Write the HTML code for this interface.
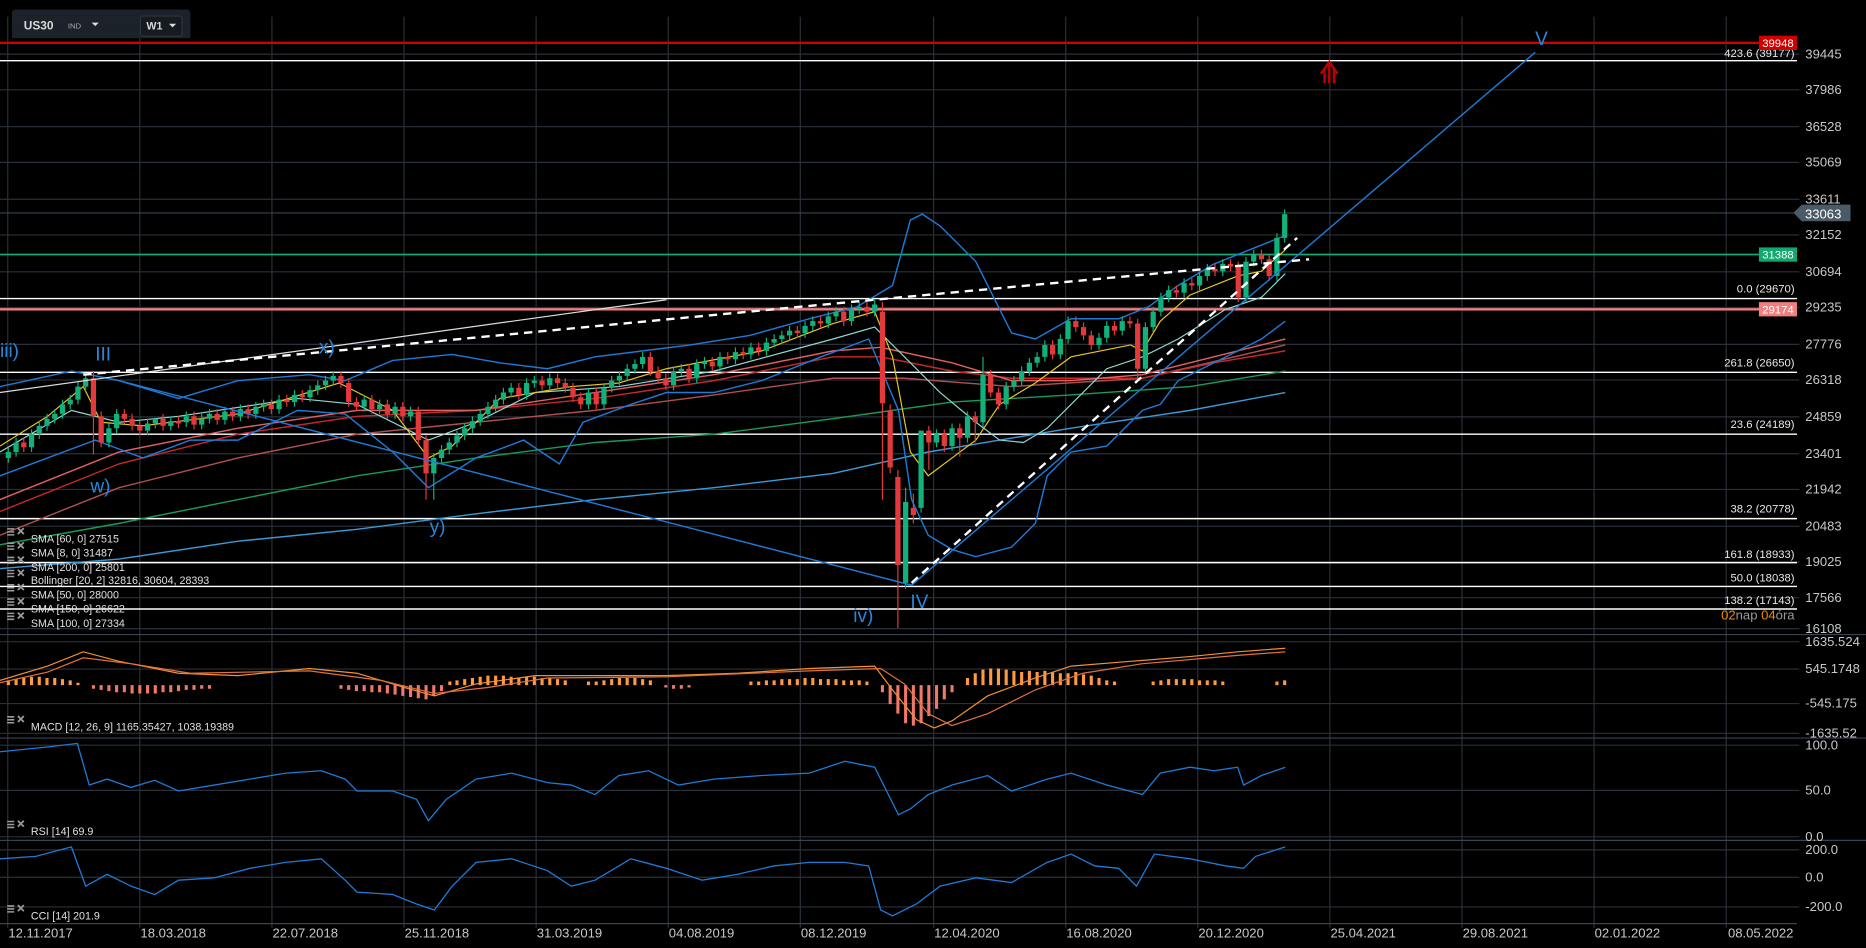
<!DOCTYPE html>
<html><head><meta charset="utf-8">
<style>
html,body{margin:0;padding:0;background:#000;overflow:hidden}
svg{display:block}
text{font-family:"Liberation Sans",sans-serif}
</style></head>
<body>
<svg width="1866" height="948" viewBox="0 0 1568 797" preserveAspectRatio="none" xmlns="http://www.w3.org/2000/svg">
<rect width="1568" height="797" fill="#000"/>
<g stroke="#2a3038" stroke-width="1">
<path d="M0 45.5H1512M0 75.5H1512M0 106.5H1512M0 136.5H1512M0 167.5H1512M0 197.5H1512M0 228.5H1512M0 258.5H1512M0 289.5H1512M0 319.5H1512M0 350.5H1512M0 381.5H1512M0 411.5H1512M0 442.5H1512M0 472.5H1512M0 502.5H1512M0 528.5H1512M0 539.5H1512M0 562.5H1512M0 591.5H1512M0 616.5H1512M0 626.5H1512M0 664.5H1512M0 703.5H1512M0 714.5H1512M0 737.5H1512M0 762.5H1512"/>
<path d="M6.5 14V780M117.5 14V780M228.5 14V780M339.5 14V780M450.5 14V780M561.5 14V780M672.5 14V780M784.5 14V780M895.5 14V780M1006.5 14V780M1117.5 14V780M1228.5 14V780M1339.5 14V780M1450.5 14V780"/>
</g>
<g stroke="#3a4450" stroke-width="1">
<line x1="0" y1="533.5" x2="1568" y2="533.5"/>
<line x1="0" y1="620.5" x2="1568" y2="620.5"/>
<line x1="0" y1="706.5" x2="1568" y2="706.5"/>
<line x1="0" y1="776.5" x2="1510" y2="776.5"/>
</g>
<g stroke="#fff" stroke-width="1.2">
<line x1="0" y1="51" x2="1510" y2="51"/>
<line x1="0" y1="251" x2="1510" y2="251"/>
<line x1="0" y1="313" x2="1510" y2="313"/>
<line x1="0" y1="365" x2="1510" y2="365"/>
<line x1="0" y1="436" x2="1510" y2="436"/>
<line x1="0" y1="473" x2="1510" y2="473"/>
<line x1="0" y1="493" x2="1510" y2="493"/>
<line x1="0" y1="512" x2="1510" y2="512"/>
</g>
<line x1="0" y1="36" x2="1480" y2="36" stroke="#d00000" stroke-width="2"/>
<line x1="0" y1="214" x2="1480" y2="214" stroke="#12a870" stroke-width="1.5"/>
<line x1="0" y1="260" x2="1480" y2="260" stroke="#f08080" stroke-width="2"/>
<line x1="0" y1="179" x2="1510" y2="179" stroke="#3a4450" stroke-width="1"/>
<!-- moving averages -->
<g fill="none" stroke-width="1.2">
<polyline stroke="#3a9ad8" points="0,478 100,470 200,455 300,445 400,432 500,420 600,410 700,398 780,380 900,360 1000,345 1080,330"/>
<polyline stroke="#1a9a5a" points="0,458 100,440 200,420 300,400 400,385 500,372 600,365 700,352 800,338 900,332 1000,325 1080,312"/>
<polyline stroke="#b05050" points="0,450 100,410 200,385 300,365 400,355 500,345 600,332 700,318 760,318 850,325 960,318 1080,290"/>
<polyline stroke="#c82828" points="0,430 100,390 200,365 300,350 400,345 500,335 600,320 700,300 740,300 800,312 850,318 900,318 960,318 1020,305 1080,295"/>
<polyline stroke="#e06060" points="0,420 100,380 200,360 300,345 400,345 500,330 600,315 700,295 740,292 800,305 850,320 900,320 960,315 1020,300 1080,285"/>
<polyline stroke="#8fd8d0" stroke-width="1" points="0,380 60,345 100,355 150,350 250,335 300,340 360,370 400,355 450,330 520,325 600,312 700,285 735,275 760,300 790,330 820,355 840,370 860,372 880,360 900,340 930,310 960,300 990,285 1030,260 1060,250 1080,230"/>
<polyline stroke="#e8c820" stroke-width="1" points="0,375 40,350 70,325 85,355 120,358 200,348 285,322 330,345 360,385 380,375 420,335 480,325 520,322 560,310 640,295 700,272 735,262 750,300 765,380 780,400 800,385 820,370 840,340 870,322 900,300 950,290 960,295 975,270 1000,248 1040,232 1060,228 1080,210"/>
<polyline stroke="#1e7ad6" points="0,325 60,312 100,320 150,335 200,320 260,315 290,320 330,303 380,298 420,305 460,310 500,300 540,295 580,290 630,282 680,268 720,258 750,240 765,185 775,180 790,190 820,220 850,280 870,285 900,268 940,268 965,258 990,240 1020,222 1050,210 1080,198"/>
<polyline stroke="#1e7ad6" points="0,400 40,385 80,370 120,385 160,370 200,370 250,345 290,348 330,380 360,410 400,385 440,370 470,390 490,355 530,340 560,330 600,330 640,320 690,300 730,285 755,345 766,420 780,450 800,462 820,468 850,460 870,440 880,400 900,380 930,375 960,345 975,340 990,320 1030,300 1060,285 1080,270"/>
</g>
<!-- candle wicks -->
<path fill="none" stroke="#12b07a" stroke-width="1" d="M7 376V389M13.5 368V384M26.5 361V380M33 354V369M39.5 348V362M46 344V356M52.5 336V352M59 332V344M65.5 321V340M72 314V329M91.5 356V376M98 344V364M124 352V366M130.5 352V360M143.5 350V362M156.5 346V359M169.5 348V361M176 344V356M189 342V357M202 340V354M215 338V352M221.5 336V346M234.5 332V348M247.5 328V342M260.5 324V338M267 320V332M273.5 316V328M280 312V324M306 332V346M319 336V348M332 338V352M345 342V354M364.5 381V420M371 374V389M377.5 368V382M384 362V376M390.5 356V370M397 350V364M403.5 344V358M410 338V352M416.5 332V346M423 326V340M429.5 322V334M442.5 318V336M449 316V326M462 314V328M494.5 326V344M507.5 322V344M514 316V330M520.5 312V324M527 306V320M533.5 302V314M540 296V310M566 308V328M572.5 306V316M585.5 302V322M592 300V310M605 296V312M618 292V306M631 288V302M644 284V299M650.5 281V292M657 278V289M663.5 274V286M676.5 270V284M683 266V278M696 262V276M702.5 258V270M715.5 256V274M722 254V264M735 252V266M761 410V495M774 420V431M787 361V376M800 356V379M813 346V372M826 300V359M845.5 321V344M852 316V329M858.5 308V324M865 301V316M871.5 296V309M878 286V304M891 281V302M897.5 266V289M923.5 280V294M930 270V288M943 266V282M962.5 271V314M969 258V279M975.5 246V266M982 240V254M995 234V250M1008 228V244M1014.5 222V236M1027.5 218V232M1047 216V254M1053.5 210V224M1073 196V236M1079.5 176V204"/>
<path fill="none" stroke="#e23a3a" stroke-width="1" d="M20 368V380M78.5 312V382M85 346V376M104.5 344V356M111 348V362M117.5 354V366M137 348V362M150 350V360M163 346V361M182.5 344V357M195.5 342V354M208.5 340V352M228 336V348M241 332V342M254 328V338M286.5 312V326M293 318V342M299.5 334V346M312.5 332V348M325.5 336V352M338.5 338V354M351.5 342V374M358 366V420M436 322V336M455.5 316V328M468.5 314V326M475 318V330M481.5 322V338M488 330V344M501 326V344M546.5 296V316M553 308V322M559.5 314V328M579 306V322M598.5 300V312M611.5 296V306M624.5 292V302M637.5 288V299M670 274V284M689.5 266V276M709 258V274M728.5 254V266M741.5 254V420M748 340V398M754.5 395V528M767.5 415V440M780.5 358V395M793.5 361V380M806.5 356V384M819.5 346V372M832.5 311V334M839 326V344M884.5 286V302M904 266V279M910.5 271V286M917 278V294M936.5 270V282M949.5 266V276M956 268V320M988.5 240V250M1001.5 234V244M1021 222V232M1034 218V228M1040.5 220V254M1060 210V222M1066.5 214V236"/>
<!-- candle bodies -->
<path fill="none" stroke="#12b07a" stroke-width="4.4" d="M7 385V380M13.5 380V372M26.5 376V365M33 365V358M39.5 358V352M46 352V348M52.5 348V340M59 340V336M65.5 336V325M72 325V318M91.5 372V360M98 360V348M124 362V356M130.5 356V352M143.5 358V354M156.5 355V350M169.5 357V352M176 352V348M189 353V346M202 350V344M215 348V342M221.5 342V340M234.5 344V336M247.5 338V332M260.5 334V328M267 328V324M273.5 324V320M280 320V316M306 342V336M319 344V340M332 348V342M345 350V346M364.5 398V385M371 385V378M377.5 378V372M384 372V366M390.5 366V360M397 360V354M403.5 354V348M410 348V342M416.5 342V336M423 336V330M429.5 330V326M442.5 332V322M449 322V320M462 324V318M494.5 340V330M507.5 340V326M514 326V320M520.5 320V316M527 316V310M533.5 310V306M540 306V300M566 324V312M572.5 312V310M585.5 318V306M592 306V304M605 308V300M618 302V296M631 298V292M644 295V288M650.5 288V285M657 285V282M663.5 282V278M676.5 280V274M683 274V270M696 272V266M702.5 266V262M715.5 270V260M722 260V258M735 262V256M761 490V422M774 427V362M787 372V365M800 375V360M813 368V350M826 355V315M845.5 340V325M852 325V320M858.5 320V312M865 312V305M871.5 305V300M878 300V290M891 298V285M897.5 285V270M923.5 290V284M930 284V274M943 278V270M962.5 310V275M969 275V262M975.5 262V250M982 250V244M995 246V238M1008 240V232M1014.5 232V226M1027.5 228V222M1047 250V220M1053.5 220V214M1073 232V200M1079.5 200V180"/>
<path fill="none" stroke="#e23a3a" stroke-width="4.4" d="M20 372V376M78.5 318V350M85 350V372M104.5 348V352M111 352V358M117.5 358V362M137 352V358M150 354V356M163 350V357M182.5 348V353M195.5 346V350M208.5 344V348M228 340V344M241 336V338M254 332V334M286.5 316V322M293 322V338M299.5 338V342M312.5 336V344M325.5 340V348M338.5 342V350M351.5 346V370M358 370V398M436 326V332M455.5 320V324M468.5 318V322M475 322V326M481.5 326V334M488 334V340M501 330V340M546.5 300V312M553 312V318M559.5 318V324M579 310V318M598.5 304V308M611.5 300V302M624.5 296V298M637.5 292V295M670 278V280M689.5 270V272M709 262V270M728.5 258V262M741.5 262V339M748 345V393M754.5 401V475M767.5 427V433M780.5 362V372M793.5 365V375M806.5 360V368M819.5 350V355M832.5 315V330M839 330V340M884.5 290V298M904 270V275M910.5 275V282M917 282V290M936.5 274V278M949.5 270V272M956 272V310M988.5 244V246M1001.5 238V240M1021 226V228M1034 222V224M1040.5 224V250M1060 214V218M1066.5 218V232"/>
<!-- wave lines -->
<polyline points="100,320 766,492 1290,44" fill="none" stroke="#1e7ad6" stroke-width="1.2"/>
<line x1="0" y1="330" x2="560" y2="252" stroke="#ddd" stroke-width="1"/>
<polyline points="70,315 735,252 1100,218" fill="none" stroke="#fff" stroke-width="2" stroke-dasharray="7,5"/>
<line x1="766" y1="490" x2="1090" y2="200" stroke="#fff" stroke-width="2" stroke-dasharray="7,5"/>
<!-- MACD -->
<path fill="none" stroke="#ff9a40" stroke-width="2.6" d="M7 576V572M13.5 576V571M20 576V570M26.5 576V569M33 576V569M39.5 576V570M46 576V570M52.5 576V571M59 576V572M65.5 576V574M378 576V573M384 576V572M390.5 576V571M397 576V570M403.5 576V569M410 576V568M416.5 576V568M423 576V568M429.5 576V569M436 576V570M442.5 576V569M449 576V569M455.5 576V570M462 576V570M468.5 576V571M475 576V572M494.5 576V573M501 576V573M507.5 576V572M514 576V571M520.5 576V570M527 576V570M533.5 576V570M540 576V571M546.5 576V572M631 576V573M637.5 576V573M644 576V572M650.5 576V572M657 576V571M663.5 576V571M670 576V571M676.5 576V570M683 576V570M689.5 576V571M696 576V571M702.5 576V571M709 576V572M715.5 576V572M722 576V572M728.5 576V573M813 576V570M819.5 576V566M826 576V563M832.5 576V562M839 576V562M845.5 576V563M852 576V564M858.5 576V565M865 576V564M871.5 576V565M878 576V564M884.5 576V565M891 576V566M897.5 576V566M904 576V565M910.5 576V567M917 576V568M923.5 576V570M930 576V572M936.5 576V573M969 576V573M975.5 576V572M982 576V571M988.5 576V571M995 576V571M1001.5 576V571M1008 576V572M1014.5 576V572M1021 576V572M1027.5 576V573M1073 576V573M1079.5 576V572"/>
<path fill="none" stroke="#f07868" stroke-width="2.6" d="M78.5 576V579M85 576V580M91.5 576V581M98 576V582M104.5 576V582M111 576V583M117.5 576V583M124 576V583M130.5 576V583M137 576V582M143.5 576V582M150 576V581M156.5 576V580M163 576V580M169.5 576V579M176 576V579M286.5 576V579M293 576V580M299.5 576V581M306 576V581M312.5 576V582M319 576V582M325.5 576V583M332 576V584M338.5 576V585M345 576V586M351.5 576V587M358 576V588M364.5 576V585M371 576V581M559.5 576V578M566 576V579M572.5 576V579M579 576V578M741.5 576V582M748 576V592M754.5 576V600M761 576V608M767.5 576V610M774 576V608M780.5 576V602M787 576V596M793.5 576V588M800 576V582"/>
<polyline fill="none" stroke="#f09030" stroke-width="1" points="0,572 40,560 70,548 100,556 150,566 200,568 260,562 300,566 340,578 365,585 400,575 450,568 500,568 560,568 620,566 680,562 735,560 750,580 770,605 785,612 800,606 830,585 870,570 900,560 950,556 1000,552 1040,548 1080,545"/>
<polyline fill="none" stroke="#e07040" stroke-width="1" points="0,574 40,565 70,553 110,558 160,566 260,564 320,572 365,583 410,578 460,570 560,569 680,564 740,562 760,575 780,600 800,610 830,600 870,580 910,566 960,558 1040,551 1080,548"/>
<!-- RSI / CCI -->
<polyline fill="none" stroke="#1e7ad6" stroke-width="1.1" points="0,632 20,630 40,628 65,625 75,660 90,655 110,662 130,656 150,665 180,660 210,655 240,650 270,648 290,655 300,665 330,665 350,672 360,690 375,672 400,655 430,650 460,658 480,660 500,668 520,652 545,648 570,660 600,655 640,652 680,650 710,640 735,645 745,665 755,685 765,680 780,668 800,660 830,652 850,665 880,655 900,650 930,660 960,668 975,650 1000,645 1020,648 1040,645 1045,660 1060,652 1080,645"/>
<polyline fill="none" stroke="#1e7ad6" stroke-width="1.1" points="0,722 30,720 60,712 72,745 90,735 110,745 130,752 150,740 180,738 210,730 240,725 270,722 290,740 300,750 330,752 350,760 365,765 380,745 400,725 430,722 460,732 480,745 500,740 530,722 560,730 590,740 620,735 650,728 680,725 710,725 730,728 740,765 750,770 770,760 790,745 820,738 850,742 880,725 900,718 920,728 940,730 955,745 970,718 1000,722 1030,728 1045,730 1055,720 1080,712"/>
<!-- red arrow -->
<path d="M1117 70 L1117 54 M1110 62 L1117 52 L1124 62 M1113 70 L1113 58 M1121 70 L1121 58" stroke="#c00000" stroke-width="2" fill="none"/>
<g fill="#2a86d8" font-size="16">
<text x="0" y="300">iii)</text>
<text x="80" y="303">III</text>
<text x="268" y="297">x)</text>
<text x="76" y="414">w)</text>
<text x="361" y="448">y)</text>
<text x="717" y="523">iv)</text>
<text x="765" y="511">IV</text>
<text x="1290" y="38">V</text>
</g>
<g fill="#e8e8e8" font-size="9.5" text-anchor="end">
<text x="1508" y="48">423.6 (39177)</text>
<text x="1508" y="246">0.0 (29670)</text>
<text x="1508" y="308">261.8 (26650)</text>
<text x="1508" y="360">23.6 (24189)</text>
<text x="1508" y="431">38.2 (20778)</text>
<text x="1508" y="469">161.8 (18933)</text>
<text x="1508" y="489">50.0 (18038)</text>
<text x="1508" y="508">138.2 (17143)</text>
</g>
<text x="1508" y="521" font-size="11" text-anchor="end" fill="#999"><tspan fill="#f08a00">02</tspan>nap <tspan fill="#f08a00">04</tspan>óra</text>
<rect x="1478" y="30" width="32" height="12" fill="#d00000"/>
<text x="1494" y="39.5" font-size="9.5" fill="#fff" text-anchor="middle">39948</text>
<rect x="1478" y="208" width="32" height="12" fill="#12a870"/>
<text x="1494" y="217.5" font-size="9.5" fill="#fff" text-anchor="middle">31388</text>
<rect x="1478" y="254" width="32" height="12" fill="#f08080"/>
<text x="1494" y="263.5" font-size="9.5" fill="#fff" text-anchor="middle">29174</text>
<path d="M1507 179 L1514 172 L1555 172 L1555 186 L1514 186 Z" fill="#4a5a66"/>
<text x="1532" y="183.5" font-size="11" fill="#fff" text-anchor="middle">33063</text>
<g fill="#c8c8c8" font-size="11">
<text x="1517" y="49">39445</text><text x="1517" y="79">37986</text><text x="1517" y="110">36528</text>
<text x="1517" y="140">35069</text><text x="1517" y="171">33611</text><text x="1517" y="201">32152</text>
<text x="1517" y="232">30694</text><text x="1517" y="262">29235</text><text x="1517" y="293">27776</text>
<text x="1517" y="323">26318</text><text x="1517" y="354">24859</text><text x="1517" y="385">23401</text>
<text x="1517" y="415">21942</text><text x="1517" y="446">20483</text><text x="1517" y="476">19025</text>
<text x="1517" y="506">17566</text><text x="1517" y="532">16108</text>
<text x="1517" y="543">1635.524</text><text x="1517" y="566">545.1748</text>
<text x="1517" y="595">-545.175</text><text x="1517" y="620">-1635.52</text>
<text x="1517" y="630">100.0</text><text x="1517" y="668">50.0</text><text x="1517" y="707">0.0</text>
<text x="1517" y="718">200.0</text><text x="1517" y="741">0.0</text><text x="1517" y="766">-200.0</text>
</g>
<g fill="#c8c8c8" font-size="11">
<text x="7" y="788">12.11.2017</text><text x="118" y="788">18.03.2018</text><text x="229" y="788">22.07.2018</text>
<text x="340" y="788">25.11.2018</text><text x="451" y="788">31.03.2019</text><text x="562" y="788">04.08.2019</text>
<text x="673" y="788">08.12.2019</text><text x="785" y="788">12.04.2020</text><text x="896" y="788">16.08.2020</text>
<text x="1007" y="788">20.12.2020</text><text x="1118" y="788">25.04.2021</text><text x="1229" y="788">29.08.2021</text>
<text x="1340" y="788">02.01.2022</text><text x="1452" y="788">08.05.2022</text>
</g>
<g font-size="9" fill="#e0e0e0">
<text x="26" y="456">SMA [60, 0] 27515</text>
<text x="26" y="468">SMA [8, 0] 31487</text>
<text x="26" y="480">SMA [200, 0] 25801</text>
<text x="26" y="491">Bollinger  [20, 2] 32816,  30604,  28393</text>
<text x="26" y="503">SMA [50, 0] 28000</text>
<text x="26" y="515">SMA [150, 0] 26622</text>
<text x="26" y="527">SMA [100, 0] 27334</text>
<text x="26" y="614">MACD [12, 26, 9] 1165.35427,  1038.19389</text>
<text x="26" y="702">RSI [14] 69.9</text>
<text x="26" y="773">CCI [14] 201.9</text>
</g>
<g fill="#9a9a9a">
<path d="M6 444h6v1.3h-6zM6 446.5h6v1.3h-6zM6 449h6v1.3h-6zM6 456h6v1.3h-6zM6 458.5h6v1.3h-6zM6 461h6v1.3h-6zM6 468h6v1.3h-6zM6 470.5h6v1.3h-6zM6 473h6v1.3h-6zM6 479h6v1.3h-6zM6 481.5h6v1.3h-6zM6 484h6v1.3h-6zM6 491h6v1.3h-6zM6 493.5h6v1.3h-6zM6 496h6v1.3h-6zM6 503h6v1.3h-6zM6 505.5h6v1.3h-6zM6 508h6v1.3h-6zM6 515h6v1.3h-6zM6 517.5h6v1.3h-6zM6 520h6v1.3h-6zM6 602h6v1.3h-6zM6 604.5h6v1.3h-6zM6 607h6v1.3h-6zM6 690h6v1.3h-6zM6 692.5h6v1.3h-6zM6 695h6v1.3h-6zM6 761h6v1.3h-6zM6 763.5h6v1.3h-6zM6 766h6v1.3h-6z"/>
</g>
<path stroke="#9a9a9a" stroke-width="1.5" d="M15 444l5 5m0-5l-5 5M15 456l5 5m0-5l-5 5M15 468l5 5m0-5l-5 5M15 479l5 5m0-5l-5 5M15 491l5 5m0-5l-5 5M15 503l5 5m0-5l-5 5M15 515l5 5m0-5l-5 5M15 602l5 5m0-5l-5 5M15 690l5 5m0-5l-5 5M15 761l5 5m0-5l-5 5"/>
<rect x="10" y="8" width="150" height="24" rx="3" fill="#1b2229"/>
<rect x="10" y="24" width="150" height="8" fill="#1b2229"/>
<text x="20" y="25" font-size="10" font-weight="bold" fill="#d8d8d8">US30</text>
<text x="57" y="24" font-size="6.5" fill="#aaa">IND</text>
<path d="M77 19 L83 19 L80 22 Z" fill="#ddd"/>
<rect x="118" y="13.5" width="35" height="17" rx="2" fill="#151b21" stroke="#2c343c"/>
<text x="123" y="25" font-size="9" font-weight="bold" fill="#d8d8d8">W1</text>
<path d="M142 20 L148 20 L145 23 Z" fill="#ddd"/>
</svg>
</body></html>
